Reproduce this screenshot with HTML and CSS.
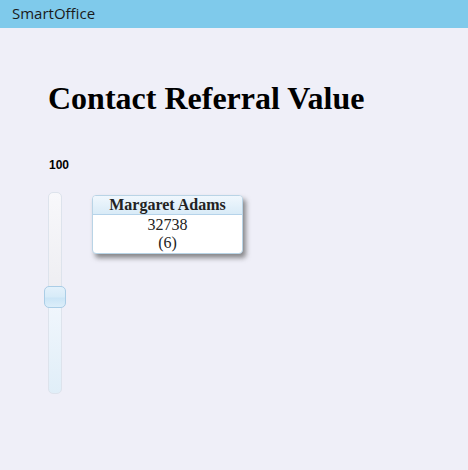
FILE: index.html
```html
<!DOCTYPE html>
<html lang="en">
<head>
  <meta charset="UTF-8">
  <meta name="viewport" content="width=device-width, initial-scale=1.0">
  <title>SmartOffice</title>
  <link rel="stylesheet" href="styles.css">
</head>
<body>
  <div class="appBar">SmartOffice</div>

  <div class="page">
    <h1>Contact Referral Value</h1>

    <div class="chartArea">
      <div class="zoom">
        <span class="zoomLabel">100</span>
        <div class="zoomTrack">
          <div class="zoomThumb"></div>
        </div>
      </div>

      <div class="nodes">
        <div class="node">
          <div class="nodeTitle">Margaret Adams</div>
          <div class="nodeBody">
            <div>32738</div>
            <div>(6)</div>
          </div>
        </div>
      </div>
    </div>
  </div>
</body>
</html>
```

FILE: styles.css
```css
body {
  margin: 0;
  background: #efeff8;
  font-family: 'Liberation Serif', 'Times New Roman', serif;
  color: #000;
}

.appBar {
  height: 28px;
  line-height: 26px;
  background: #7fcaeb;
  color: #1a1a1a;
  font-family: 'Open Sans', 'Noto Sans', sans-serif;
  font-size: 15px;
  padding-left: 12px;
}

.page {
  padding: 0 0 0 48px;
}

h1 {
  margin: 52px 0 0 0;
  font-size: 32px;
  line-height: 36px;
  font-weight: bold;
}

.chartArea {
  display: flex;
  margin-top: 42px;
}

.zoom {
  display: flex;
  flex-direction: column;
  width: 16px;
}

.zoomLabel {
  font-family: 'Liberation Sans', Arial, sans-serif;
  font-weight: bold;
  font-size: 12px;
  line-height: 14px;
  margin-left: 1px;
  white-space: nowrap;
}

.zoomTrack {
  margin-top: 20px;
  width: 14px;
  height: 202px;
  border-radius: 5px;
  box-sizing: border-box;
  border: 1px solid #dde3ec;
  background: linear-gradient(to bottom, #f8f8fb 0%, #eeeef2 48%, #f2f7fd 52%, #e0eef8 100%);
  display: flex;
  flex-direction: column;
  align-items: center;
  padding-top: 93px;
}

.zoomThumb {
  width: 22px;
  height: 22px;
  box-sizing: border-box;
  border: 1px solid #aacde6;
  border-radius: 5px;
  background: linear-gradient(to bottom, #e3f1fb 0%, #d7ebf8 50%, #cbe5f6 55%, #dceefa 100%);
  flex-shrink: 0;
}

.nodes {
  margin-left: 28px;
  padding-top: 37px;
}

.node {
  width: 151px;
  border: 1px solid #b9d4e6;
  border-radius: 4px;
  background: #fff;
  box-shadow: 3px 4px 5px rgba(80, 80, 80, 0.65);
  box-sizing: border-box;
  overflow: hidden;
}

.nodeTitle {
  height: 18px;
  line-height: 18px;
  text-align: center;
  font-weight: bold;
  font-size: 16px;
  color: #222;
  background: linear-gradient(to bottom, #f0f7fd, #d9ebf7);
  border-bottom: 1px solid #b5d3ea;
}

.nodeBody {
  text-align: center;
  font-size: 16px;
  line-height: 18px;
  color: #222;
  padding: 1px 0 1px 0;
}
```
